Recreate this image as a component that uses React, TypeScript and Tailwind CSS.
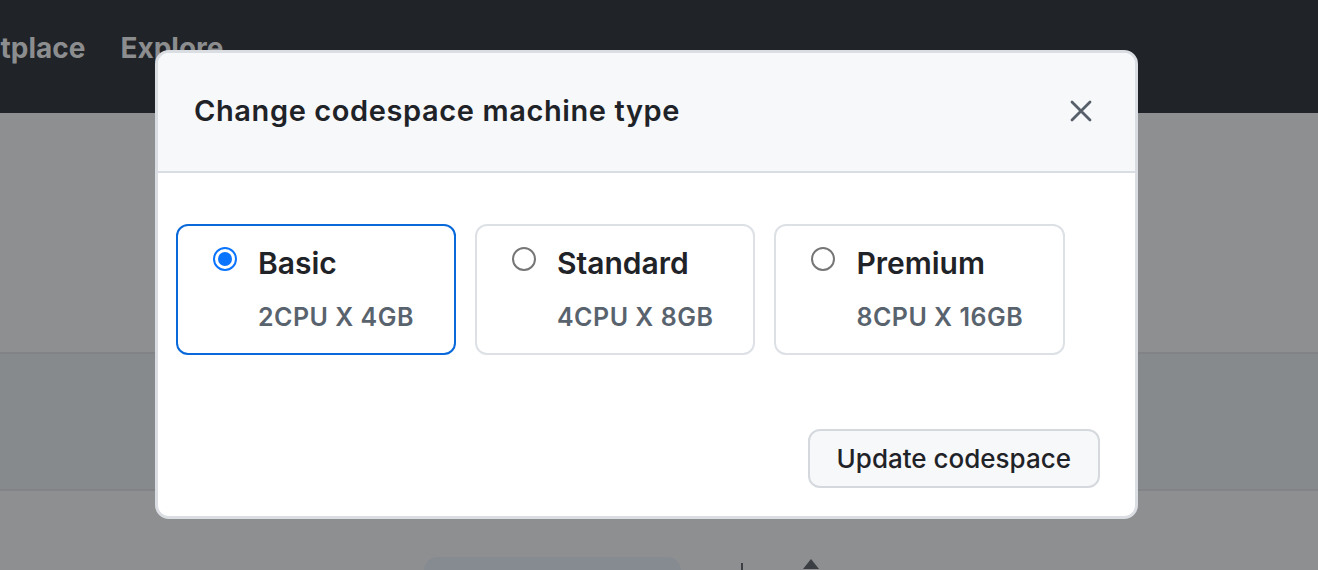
import React, { useState } from 'react';

const machines = [
  { id: 'basic', name: 'Basic', spec: '2CPU X 4GB' },
  { id: 'standard', name: 'Standard', spec: '4CPU X 8GB' },
  { id: 'premium', name: 'Premium', spec: '8CPU X 16GB' },
];

const Radio: React.FC<{ checked: boolean }> = ({ checked }) =>
  checked ? (
    <span className="flex h-[24px] w-[24px] shrink-0 items-center justify-center rounded-full border-[2px] border-[#0a74ff] bg-white">
      <span className="block h-[14px] w-[14px] rounded-full bg-[#0a74ff]" />
    </span>
  ) : (
    <span className="block h-[24px] w-[24px] shrink-0 rounded-full border-[2px] border-[#767676] bg-white" />
  );

export default function App() {
  const [selected, setSelected] = useState('basic');

  return (
    <div
      className="relative h-[570px] w-[1318px] overflow-hidden bg-[#8e8f91]"
      style={{ fontFamily: 'Inter, "Noto Sans", "Liberation Sans", sans-serif' }}
    >
      {/* page behind the overlay */}
      <div className="flex h-[113px] items-center gap-[35px] bg-[#202327] pb-[18px]">
        <span className="-ml-[86px] text-[28px] font-bold text-[#8c8d8f]">Marketplace</span>
        <span className="text-[28px] font-bold text-[#8c8d8f]">Explore</span>
      </div>
      <div className="h-[239px]" />
      <div className="h-[139px] border-y-[2px] border-[#818386] bg-[#878a8d]" />
      <div className="flex items-start gap-[60px] pl-[424px] pt-[66px]">
        <div className="h-[30px] w-[257px] rounded-t-[14px] bg-[#868b92]" />
        <div className="mt-[6px] h-[10px] w-[2px] bg-[#3b3f44]" />
        <div className="mt-[2px] h-0 w-0 border-x-[8px] border-b-[10px] border-x-transparent border-b-[#3b3f44]" />
      </div>

      {/* dialog */}
      <div className="absolute left-[155px] top-[50px] flex h-[469px] w-[983px] flex-col overflow-hidden rounded-[14px] border-[3px] border-[#dadde2] bg-white">
        <div className="flex h-[120px] shrink-0 items-center justify-between border-b-[2px] border-[#d8dee4] bg-[#f6f8fa] pl-[36px] pr-[40px] pb-[2px]">
          <h2 className="text-[29px] font-semibold tracking-[0.6px] text-[#1f2328]">Change codespace machine type</h2>
          <button className="flex h-[28px] w-[28px] items-center justify-center text-[#57606a]">
            <svg width="24" height="24" viewBox="0 0 24 24" fill="none" stroke="currentColor" strokeWidth="2.8" strokeLinecap="round">
              <path d="M3 3l18 18M21 3L3 21" />
            </svg>
          </button>
        </div>

        <div className="flex flex-1 flex-col px-[18px] pt-[51px]">
          <div className="flex gap-[19px]">
            {machines.map((m) => {
              const active = selected === m.id;
              return (
                <label
                  key={m.id}
                  onClick={() => setSelected(m.id)}
                  className={
                    'flex h-[131px] cursor-pointer flex-col rounded-[12px] border-[2px] pl-[35px] pr-[40px] pt-[19px] ' +
                    (active ? 'border-[#0969da]' : 'border-[#dde1e6]')
                  }
                >
                  <div className="flex items-center gap-[21px]">
                    <span className="-mt-[8px] block">
                      <Radio checked={active} />
                    </span>
                    <span className="text-[30px] font-semibold leading-[36px] text-[#1f2328]">{m.name}</span>
                  </div>
                  <div className="mt-[21px] pl-[45px] text-[25px] font-semibold leading-[30px] tracking-[0.5px] text-[#59636e]">{m.spec}</div>
                </label>
              );
            })}
          </div>

          <div className="mt-auto flex justify-end pb-[28px] pr-[17px]">
            <button className="h-[59px] rounded-[12px] border-[2px] border-[#d5d9de] bg-[#f6f8fa] px-[27px] text-[26px] font-medium text-[#1f2328]">
              Update codespace
            </button>
          </div>
        </div>
      </div>
    </div>
  );
}
